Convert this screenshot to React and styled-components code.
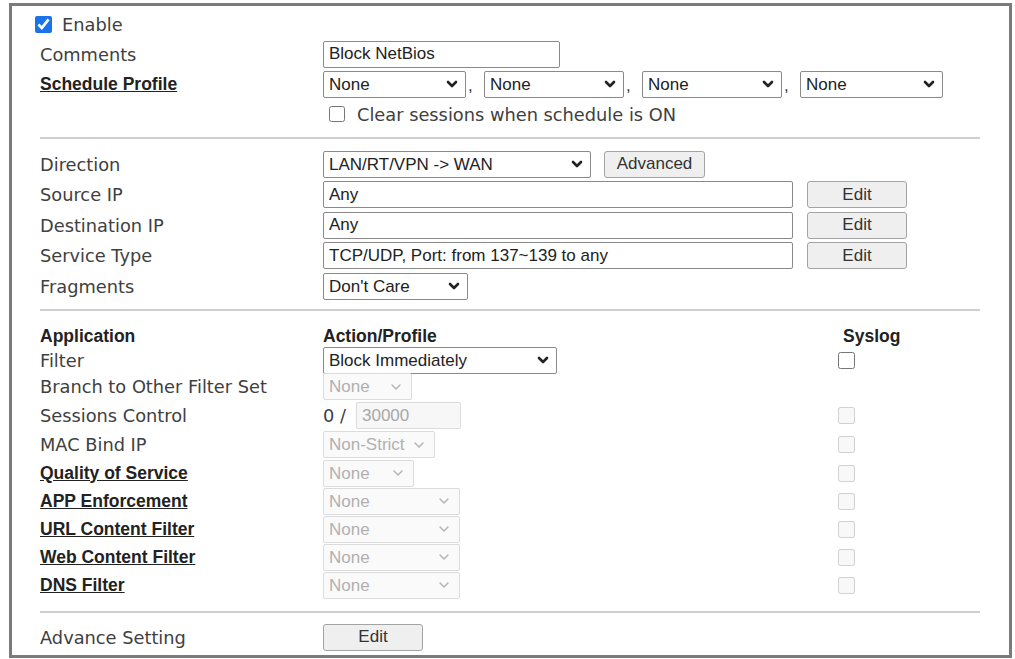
import React from "react";
import styled, { createGlobalStyle } from "styled-components";

const GlobalStyle = createGlobalStyle`
  html, body {
    margin: 0;
    padding: 0;
    background: #fff;
  }
  body {
    font-family: "DejaVu Sans", Verdana, sans-serif;
  }
`;

const Frame = styled.div`
  margin: 3px 0 0 9px;
  width: 1003px;
  box-sizing: border-box;
  border: 3px solid #7b7b7b;
  padding: 3px 29px 4px 28px;
  background: #fff;
`;

const Row = styled.div`
  display: grid;
  grid-template-columns: ${(p) => (p.$syslog ? "283px 515px 1fr" : "283px 1fr")};
  align-items: center;
  height: ${(p) => p.$h || 30}px;
`;

const Cell = styled.div`
  display: flex;
  align-items: center;
  gap: ${(p) => p.$gap || 0}px;
`;

const Label = styled.span`
  font-family: "DejaVu Sans", Verdana, sans-serif;
  font-size: 17.8px;
  color: #404040;
  white-space: nowrap;
  width: ${(p) => (p.$w ? `${p.$w}px` : "auto")};
`;

const LinkLabel = styled.a`
  font-family: "Liberation Sans", Arial, sans-serif;
  font-weight: bold;
  font-size: 17.5px;
  color: #222;
  text-decoration: underline;
  white-space: nowrap;
  cursor: pointer;
`;

const HeadLabel = styled.span`
  font-family: "Liberation Sans", Arial, sans-serif;
  font-weight: bold;
  font-size: 17.5px;
  color: #222;
  padding-left: ${(p) => p.$pad || 0}px;
  padding-top: 3px;
`;

const TextBox = styled.input`
  box-sizing: border-box;
  width: ${(p) => p.$w}px;
  height: 27px;
  margin: 0;
  border: 1px solid #8a8a8a;
  border-radius: 2px;
  padding: 0 5px;
  font-family: "Liberation Sans", Arial, sans-serif;
  font-size: 17px;
  color: #222;
  background: #fff;
  &:disabled {
    border-color: #dcdcdc;
    color: #a8a8a8;
    background: #f7f7f7;
  }
`;

const SelectWrap = styled.span`
  position: relative;
  display: inline-block;
  width: ${(p) => p.$w}px;
  height: 27px;
`;

const NativeSelect = styled.select`
  appearance: none;
  width: 100%;
  height: 100%;
  box-sizing: border-box;
  margin: 0;
  border: 1px solid ${(p) => (p.disabled ? "#dcdcdc" : "#8a8a8a")};
  border-radius: 2px;
  padding: 0 24px 0 5px;
  font-family: "Liberation Sans", Arial, sans-serif;
  font-size: 17px;
  color: ${(p) => (p.disabled ? "#b0b0b0" : "#222")};
  background: ${(p) => (p.disabled ? "#fafafa" : "#fff")};
  opacity: 1;
`;

const Arrow = styled.svg`
  position: absolute;
  right: ${(p) => (p.$off ? 10 : 8)}px;
  top: 50%;
  margin-top: -4px;
  pointer-events: none;
`;

const Select = ({ w, value, disabled }) => (
  <SelectWrap $w={w}>
    <NativeSelect disabled={disabled} defaultValue={value}>
      <option>{value}</option>
    </NativeSelect>
    <Arrow $off={disabled} width="12" height="8" viewBox="0 0 12 8">
      <polyline
        points="2,2 6,6 10,2"
        fill="none"
        stroke={disabled ? "#b4b4b4" : "#222"}
        strokeWidth={disabled ? 1.5 : 2.6}
        strokeLinecap="round"
        strokeLinejoin="round"
      />
    </Arrow>
  </SelectWrap>
);

const Button = styled.button`
  box-sizing: border-box;
  width: ${(p) => p.$w}px;
  height: 27px;
  margin: 0 0 0 ${(p) => p.$ml || 0}px;
  padding: 0;
  border: 1px solid #a3a3a3;
  border-radius: 3px;
  background: #efefef;
  font-family: "Liberation Sans", Arial, sans-serif;
  font-size: 17px;
  color: #333;
`;

const Check = styled.input.attrs({ type: "checkbox" })`
  width: ${(p) => p.$size || 16}px;
  height: ${(p) => p.$size || 16}px;
  margin: 0 0 0 ${(p) => p.$ml || 0}px;
  accent-color: #1a73e8;
`;

const Comma = styled.span`
  width: 18px;
  padding-left: 2px;
  box-sizing: border-box;
  align-self: flex-end;
  margin-bottom: 2px;
  font-family: "Liberation Sans", Arial, sans-serif;
  font-size: 17px;
  color: #333;
`;

const Divider = styled.hr`
  border: 0;
  border-top: 2px solid #d0d0d0;
  margin: ${(p) => p.$top}px 0 ${(p) => p.$bottom}px;
`;

const appRows = [
  { label: "Filter", link: false, h: 26, kind: "filter", log: "on" },
  { label: "Branch to Other Filter Set", link: false, h: 28, kind: "select", w: 89, log: null },
  { label: "Sessions Control", link: false, h: 30, kind: "sessions", log: "off" },
  { label: "MAC Bind IP", link: false, h: 28.5, kind: "select", w: 112, value: "Non-Strict", log: "off" },
  { label: "Quality of Service", link: true, h: 28, kind: "select", w: 91, log: "off" },
  { label: "APP Enforcement", link: true, h: 28, kind: "select", w: 137, log: "off" },
  { label: "URL Content Filter", link: true, h: 28, kind: "select", w: 137, log: "off" },
  { label: "Web Content Filter", link: true, h: 28, kind: "select", w: 137, log: "off" },
  { label: "DNS Filter", link: true, h: 28, kind: "select", w: 137, log: "off" },
];

const renderAction = (r) => {
  if (r.kind === "filter") return <Select w={234} value="Block Immediately" />;
  if (r.kind === "sessions")
    return (
      <Cell>
        <Label $w={33}>0 /</Label>
        <TextBox $w={105} disabled defaultValue="30000" />
      </Cell>
    );
  return <Select w={r.w} value={r.value || "None"} disabled />;
};

const App = () => (
  <>
    <GlobalStyle />
    <Frame>
      <Row>
        <Cell $gap={10}>
          <Check $ml={-5} $size={17} defaultChecked />
          <Label>Enable</Label>
        </Cell>
      </Row>
      <Row>
        <Label>Comments</Label>
        <Cell>
          <TextBox $w={237} defaultValue="Block NetBios" />
        </Cell>
      </Row>
      <Row>
        <LinkLabel>Schedule Profile</LinkLabel>
        <Cell>
          <Select w={143} value="None" />
          <Comma>,</Comma>
          <Select w={140} value="None" />
          <Comma>,</Comma>
          <Select w={140} value="None" />
          <Comma>,</Comma>
          <Select w={143} value="None" />
        </Cell>
      </Row>
      <Row>
        <span />
        <Cell $gap={12}>
          <Check $ml={6} />
          <Label>Clear sessions when schedule is ON</Label>
        </Cell>
      </Row>

      <Divider $top={8} $bottom={10} />

      <Row $h={30.5}>
        <Label>Direction</Label>
        <Cell>
          <Select w={268} value="LAN/RT/VPN -> WAN" />
          <Button $w={101} $ml={13}>Advanced</Button>
        </Cell>
      </Row>
      {[
        ["Source IP", "Any"],
        ["Destination IP", "Any"],
        ["Service Type", "TCP/UDP, Port: from 137~139 to any"],
      ].map(([label, value]) => (
        <Row $h={30.5} key={label}>
          <Label>{label}</Label>
          <Cell>
            <TextBox $w={470} defaultValue={value} readOnly />
            <Button $w={100} $ml={14}>Edit</Button>
          </Cell>
        </Row>
      ))}
      <Row $h={30.5}>
        <Label>Fragments</Label>
        <Cell>
          <Select w={145} value="Don't Care" />
        </Cell>
      </Row>

      <Divider $top={7} $bottom={12} />

      <Row $syslog $h={24}>
        <HeadLabel>Application</HeadLabel>
        <HeadLabel>Action/Profile</HeadLabel>
        <HeadLabel $pad={5}>Syslog</HeadLabel>
      </Row>
      {appRows.map((r) => (
        <Row $syslog $h={r.h} key={r.label}>
          {r.link ? <LinkLabel>{r.label}</LinkLabel> : <Label>{r.label}</Label>}
          <Cell>{renderAction(r)}</Cell>
          <Cell>{r.log && <Check $size={17} disabled={r.log === "off"} />}</Cell>
        </Row>
      ))}

      <Divider $top={12} $bottom={10} />

      <Row $h={28}>
        <Label>Advance Setting</Label>
        <Cell>
          <Button $w={100}>Edit</Button>
        </Cell>
      </Row>
    </Frame>
  </>
);

export default App;
